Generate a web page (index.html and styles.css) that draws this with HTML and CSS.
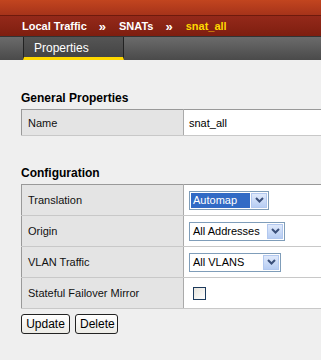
FILE: index.html
```html
<!DOCTYPE html>
<html lang="en">
<head>
  <meta charset="UTF-8" />
  <title>SNAT Properties</title>
  <link rel="stylesheet" href="styles.css">
</head>
<body>
  <div class="header">
    <div class="topband"></div>
    <div class="crumbs">
      <span>Local Traffic</span>
      <span class="sep">&raquo;</span>
      <span>SNATs</span>
      <span class="sep">&raquo;</span>
      <span class="current">snat_all</span>
    </div>
  </div>
  <div class="tabs">
    <div class="tab active">Properties</div>
  </div>

  <div class="content">
    <h3>General Properties</h3>
    <table class="props">
      <tr>
        <td class="label">Name</td>
        <td class="value">snat_all</td>
      </tr>
    </table>

    <h3 class="second">Configuration</h3>
    <table class="props config">
      <tr>
        <td class="label">Translation</td>
        <td class="value">
          <div class="select sel-translation"><span class="text selected">Automap</span><span class="arrow"><svg width="9" height="6" viewBox="0 0 9 6"><path d="M1 1 L4.5 4.5 L8 1" fill="none" stroke="#3a4f7a" stroke-width="2"/></svg></span></div>
        </td>
      </tr>
      <tr>
        <td class="label">Origin</td>
        <td class="value">
          <div class="select sel-origin"><span class="text">All Addresses</span><span class="arrow"><svg width="9" height="6" viewBox="0 0 9 6"><path d="M1 1 L4.5 4.5 L8 1" fill="none" stroke="#3a4f7a" stroke-width="2"/></svg></span></div>
        </td>
      </tr>
      <tr>
        <td class="label">VLAN Traffic</td>
        <td class="value">
          <div class="select sel-vlan"><span class="text">All VLANS</span><span class="arrow"><svg width="9" height="6" viewBox="0 0 9 6"><path d="M1 1 L4.5 4.5 L8 1" fill="none" stroke="#3a4f7a" stroke-width="2"/></svg></span></div>
        </td>
      </tr>
      <tr>
        <td class="label">Stateful Failover Mirror</td>
        <td class="value"><span class="checkbox"></span></td>
      </tr>
    </table>

    <div class="actions">
      <button class="btn btn-update">Update</button>
      <button class="btn btn-delete">Delete</button>
    </div>
  </div>
</body>
</html>
```
FILE: styles.css
```css
body {
  margin: 0;
  padding: 0;
  background: #efefef;
  font-family: "Liberation Sans", Arial, sans-serif;
  font-size: 11px;
  color: #000;
  overflow: hidden;
}

.header {
  background: #8e2412;
}

.topband {
  height: 15px;
  background: linear-gradient(to bottom, #c2451f, #a6331a);
  border-bottom: 1px solid #6e1a0c;
}

.crumbs {
  height: 20px;
  padding-left: 22px;
  display: flex;
  align-items: center;
  background: linear-gradient(to bottom, #94291a, #7e1e0f);
  color: #fff;
  font-weight: bold;
  font-size: 11px;
}

.crumbs .sep {
  margin: 0 13px 0 12px;
  font-size: 13px;
}

.crumbs .current {
  color: #ffd800;
}

.tabs {
  height: 23px;
  background: linear-gradient(to bottom, #6b6b6b, #4a4a4a);
  border-top: 1px solid #333;
  display: flex;
  padding-left: 23px;
}

.tab {
  width: 101px;
  border-left: 1px solid #222;
  border-right: 1px solid #222;
  color: #fff;
  font-size: 12px;
  padding: 4px 0 0 10px;
  box-sizing: border-box;
  background: linear-gradient(to bottom, #555, #444);
}

.tab.active {
  border-bottom: 3px solid #ffd800;
}

.content {
  padding: 0 0 0 21px;
}

h3 {
  margin: 0;
  padding-top: 31px;
  height: 18px;
  font-size: 12px;
  font-weight: bold;
  color: #000;
}

h3.second {
  padding-top: 30px;
}

.props {
  border-collapse: collapse;
  width: 100%;
  border-left: 1px solid #999;
  border-top: 1px solid #999;
  border-bottom: 1px solid #999;
}

.props td {
  height: 25px;
  padding: 0;
  font-size: 11px;
  border-bottom: 1px solid #c8c8c8;
}

.config td {
  height: 30px;
}

.props .label {
  width: 155px;
  padding-left: 6px;
  background: #e4e4e4;
  border-right: 1px solid #aaa;
  color: #111;
}

.props .value {
  background: #fff;
  padding-left: 5px;
}

.select {
  display: inline-flex;
  align-items: center;
  height: 19px;
  box-sizing: border-box;
  border: 1px solid #7f9db9;
  background: #fff;
  vertical-align: middle;
  padding: 1px;
}

.select .text {
  flex: 1;
  padding-left: 2px;
  line-height: 15px;
  white-space: nowrap;
}

.select .selected {
  background: #316ac5;
  color: #fff;
  margin-right: 1px;
}

.select .arrow {
  width: 16px;
  height: 15px;
  display: flex;
  align-items: center;
  justify-content: center;
  background: linear-gradient(to bottom, #dfe9fb, #b7cdf3);
  border: 1px solid #b2c8ef;
  box-sizing: border-box;
}

.sel-translation { width: 80px; }
.sel-origin { width: 96px; }
.sel-vlan { width: 92px; }

.checkbox {
  display: inline-block;
  width: 11px;
  height: 11px;
  margin-left: 4px;
  border: 1px solid #1c3a5c;
  background: linear-gradient(135deg, #e6e4dc, #fff);
  vertical-align: middle;
}

.actions {
  padding-top: 5px;
  display: flex;
  gap: 5px;
}

.btn {
  height: 20px;
  padding: 0 4px;
  font-family: "Liberation Sans", Arial, sans-serif;
  font-size: 12px;
  color: #000;
  border: 1px solid #222;
  border-radius: 3px;
  background: linear-gradient(to bottom, #fff, #ecebe6);
}

.btn-update { width: 49px; }
.btn-delete { width: 43px; }
```
